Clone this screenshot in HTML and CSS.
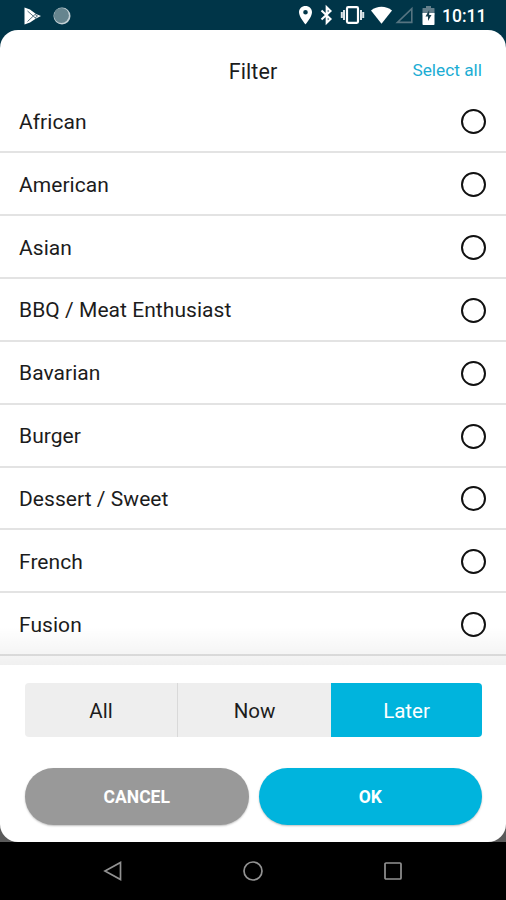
FILE: index.html
```html
<!DOCTYPE html>
<html lang="en">
<head>
    <meta charset="UTF-8">
    <title>Filter</title>
    <link rel="stylesheet" href="styles.css">
</head>
<body>
    <div class="status-bar">
        <div class="status-left">
            <svg width="20" height="20" viewBox="0 0 20 20">
                <path d="M1.5 1.5L7 3.5L13 8L18 10L13 12.5L7 16.5L1.5 18.5Z" fill="#fff"/>
                <path d="M4.5 5L13 12.5M4.5 15.5L13 7.5M12 8.5L14.5 10L12 12" fill="none" stroke="#55727f" stroke-width="1"/>
            </svg>
            <svg width="18" height="18" viewBox="0 0 18 18">
                <circle cx="9" cy="9" r="8.5" fill="#c4d1d6"/>
                <circle cx="8.4" cy="8.4" r="7.5" fill="#66858f"/>
            </svg>
        </div>
        <div class="status-right">
            <!-- location, bluetooth, vibrate, wifi, signal -->
            <svg width="123" height="22" viewBox="0 0 123 22">
                <path fill="#fff" fill-rule="evenodd" d="M6.5 2C2.8 2 0 4.7 0 8.3C0 13 6.5 20.5 6.5 20.5S13 13 13 8.3C13 4.7 10.2 2 6.5 2ZM6.5 6A2.3 2.3 0 1 1 6.5 10.6A2.3 2.3 0 1 1 6.5 6Z"/>
                <path fill="none" stroke="#fff" stroke-width="2.1" d="M22.5 6.5L31.5 15L27.7 18.7V3.3L31.5 7L22.5 15.5"/>
                <path fill="none" stroke="#fff" stroke-width="2.2" d="M49.2 3.2H57.8Q59 3.2 59 4.4V17.6Q59 18.8 57.8 18.8H49.2Q48 18.8 48 17.6V4.4Q48 3.2 49.2 3.2Z"/>
                <path fill="none" stroke="#dce4e7" stroke-width="2" d="M45 6V16M62 6V16M42.8 8V14M64.2 8V14"/>
                <path fill="#fff" d="M72 6.6C78 1.6 87 1.6 93 6.6L82.5 19.8Z"/>
                <path fill="none" stroke="#567481" stroke-width="1.6" d="M98.4 18.4H112.8V4.6Z"/>
            </svg>
            <svg class="battery" width="13" height="20" viewBox="0 0 13 20">
                <path fill="#647f8b" d="M4 0H9V2H12Q12.5 2 12.5 2.6V9H.5V2.6Q.5 2 1 2H4Z"/>
                <path fill="#fff" d="M.5 7H12.5V18.2Q12.5 19 11.7 19H1.3Q.5 19 .5 18.2Z"/>
                <path fill="#173e4d" d="M7.2 4L3.5 10.5H6V15L9.5 9H7.2Z"/>
            </svg>
            <span class="clock">10:11</span>
        </div>
    </div>

    <div class="backdrop">
        <div class="dialog">
            <div class="header">
                <span></span>
                <span class="title">Filter</span>
                <span class="select-all">Select all</span>
            </div>

            <div class="list">
                <div class="row"><span>African</span><span class="radio"></span></div>
                <div class="row"><span>American</span><span class="radio"></span></div>
                <div class="row"><span>Asian</span><span class="radio"></span></div>
                <div class="row"><span>BBQ / Meat Enthusiast</span><span class="radio"></span></div>
                <div class="row"><span>Bavarian</span><span class="radio"></span></div>
                <div class="row"><span>Burger</span><span class="radio"></span></div>
                <div class="row"><span>Dessert / Sweet</span><span class="radio"></span></div>
                <div class="row"><span>French</span><span class="radio"></span></div>
                <div class="row"><span>Fusion</span><span class="radio"></span></div>
                <div class="list-fade"></div>
            </div>

            <div class="tabs">
                <div class="tab">All</div>
                <div class="tab">Now</div>
                <div class="tab active">Later</div>
            </div>

            <div class="actions">
                <div class="btn cancel">CANCEL</div>
                <div class="btn ok">OK</div>
            </div>
        </div>
    </div>

    <div class="nav-bar">
        <svg width="20" height="20" viewBox="0 0 20 20"><path d="M17.5 1.5V18.5L2 10Z"/></svg>
        <svg width="20" height="20" viewBox="0 0 20 20"><circle cx="10" cy="10" r="9"/></svg>
        <svg width="20" height="20" viewBox="0 0 20 20"><rect x="2" y="2" width="16" height="16" rx="1"/></svg>
    </div>
</body>
</html>
```
FILE: styles.css
```css
* {
    box-sizing: border-box;
}
body {
    margin: 0;
    height: 900px;
    overflow: hidden;
    background-color: #000;
    color: #1c1c1c;
    font-family: Roboto, sans-serif;
    display: flex;
    flex-direction: column;
}
.status-bar {
    height: 29.5px;
    flex: none;
    background-color: #003548;
    display: flex;
    justify-content: space-between;
    padding: 5px 19.5px 0 23px;
}
.status-left {
    display: flex;
    align-items: center;
    gap: 10px;
    height: 21px;
}
.status-left svg {
    flex: none;
}
.status-right {
    display: flex;
    align-items: flex-start;
}
.status-right svg {
    flex: none;
    margin-top: -1px;
}
.status-right .battery {
    margin-top: 1px;
}
.clock {
    color: #fff;
    font-size: 17.5px;
    font-weight: 500;
    line-height: 22px;
    margin-left: 7px;
}
.backdrop {
    height: 812.5px;
    flex: none;
    background: linear-gradient(#003548 50%, #5a5a5a 50%);
}
.dialog {
    height: 812px;
    background-color: #fff;
    border-radius: 18px;
    display: flex;
    flex-direction: column;
}
.header {
    height: 61px;
    flex: none;
    display: grid;
    grid-template-columns: 1fr auto 1fr;
    align-items: center;
    padding: 22px 24px 0;
    line-height: 40px;
}
.title {
    font-size: 21.5px;
    letter-spacing: 0.1px;
}
.select-all {
    color: #1cadd4;
    font-size: 17.3px;
    line-height: 36px;
    padding-bottom: 3px;
    text-align: right;
}
.list {
    height: 574.5px;
    flex: none;
    position: relative;
    overflow: hidden;
}
.row {
    height: 62.85px;
    border-bottom: 2px solid #e3e3e3;
    display: flex;
    justify-content: space-between;
    align-items: center;
    padding: 2px 20px 0 19px;
    font-size: 21px;
    letter-spacing: 0.05px;
}
.radio {
    width: 25px;
    height: 25px;
    border: 2px solid #111;
    border-radius: 50%;
}
/* shade above the footer */
.list-fade {
    position: absolute;
    left: 0;
    right: 0;
    bottom: 0;
    height: 38px;
    background: linear-gradient(rgba(0, 0, 0, 0), rgba(0, 0, 0, 0.06));
}
.tabs {
    height: 54px;
    flex: none;
    margin: 18px 24px 0 25px;
    display: grid;
    grid-template-columns: 153px 153px 1fr;
    border-radius: 4px;
    overflow: hidden;
}
.tab {
    background-color: #eee;
    font-size: 20.5px;
    line-height: 56px;
    text-align: center;
}
.tab:first-child {
    border-right: 1px solid #d9d9d9;
}
.tab.active {
    background-color: #00b4dd;
    color: #fff;
}
.actions {
    margin: 31px 24px 0 25px;
    display: grid;
    grid-template-columns: 1fr 1fr;
    gap: 10px;
}
.btn {
    height: 57px;
    border-radius: 29px;
    box-shadow: 0 1px 2px rgba(0, 0, 0, 0.25);
    color: #fff;
    font-size: 17.5px;
    font-weight: 700;
    line-height: 59px;
    text-align: center;
}
.cancel {
    background-color: #999;
}
.ok {
    background-color: #00b4dd;
}
.nav-bar {
    flex: 1;
    display: flex;
    justify-content: center;
    align-items: center;
    gap: 120px;
}
.nav-bar svg {
    fill: none;
    stroke: #929292;
    stroke-width: 1.7;
}
```
